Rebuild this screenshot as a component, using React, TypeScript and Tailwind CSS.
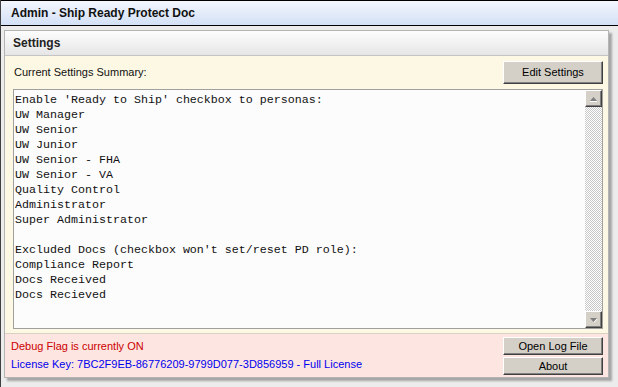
const personas = [
  "Enable 'Ready to Ship' checkbox to personas:",
  "UW Manager",
  "UW Senior",
  "UW Junior",
  "UW Senior - FHA",
  "UW Senior - VA",
  "Quality Control",
  "Administrator",
  "Super Administrator",
  "",
  "Excluded Docs (checkbox won't set/reset PD role):",
  "Compliance Report",
  "Docs Received",
  "Docs Recieved",
];

const btn =
  "bg-[#d4d0c8] border border-t-white border-l-white border-r-[#404040] border-b-[#404040] shadow-[inset_-1px_-1px_0_#808080] text-[11px] text-black flex items-center justify-center";

const ScrollArrow: React.FC<{ up?: boolean }> = ({ up }) => (
  <div className={`w-[17px] h-[17px] ${btn}`}>
    <svg width="9" height="6" viewBox="0 0 9 6">
      {up ? (
        <>
          <path d="M1 5 L4.5 1 L8 5 Z" fill="#808080" />
          <path d="M1 5.5 H8" stroke="#ffffff" strokeWidth="1" />
        </>
      ) : (
        <>
          <path d="M1 1 L4.5 5 L8 1 Z" fill="#808080" />
          <path d="M5 5.5 L8 2" stroke="#ffffff" strokeWidth="1" />
        </>
      )}
    </svg>
  </div>
);

const App: React.FC = () => {
  return (
    <div className="w-[618px] h-[387px] bg-[#ececec] border-l border-[#404040] overflow-hidden font-['Liberation_Sans',Arial,sans-serif]">
      {/* Title bar */}
      <div className="h-[26px] border-t border-b border-black bg-gradient-to-b from-[#f4f7fd] to-[#d3e0f6] flex items-center pl-[10px]">
        <span className="text-[12px] font-bold text-[#111]">Admin - Ship Ready Protect Doc</span>
      </div>

      {/* Settings panel */}
      <div className="pl-[3px] pt-[4px]">
        <div className="w-[605px] border border-[#b4b4b4] shadow-[3px_3px_2px_rgba(0,0,0,0.3)]">
          <div className="h-[25px] bg-gradient-to-b from-[#fdfdfd] to-[#e6e6e6] border-b border-[#c4c4c4] flex items-center pl-[8px]">
            <span className="text-[12px] font-bold text-[#222]">Settings</span>
          </div>

          <div className="bg-[#fdf8e3] pl-[8px] pr-[5px] pt-[5px] pb-[4px] border-b border-[#d8d2c0]">
            <div className="flex justify-between items-center">
              <span className="text-[11px] text-[#111] pl-[1px]">Current Settings Summary:</span>
              <div className={`w-[100px] h-[23px] ${btn}`}>Edit Settings</div>
            </div>
            <div className="mt-[5px] h-[240px] border border-[#a0a0a0] bg-[#fcfcfc] flex">
              <div className="flex-1 pl-[1px] pt-[3px] font-['Liberation_Mono',monospace] text-[11.67px] leading-[15px] text-[#111] whitespace-pre">
                {personas.map((line, i) => (
                  <div key={i} className="h-[15px]">
                    {line}
                  </div>
                ))}
              </div>
              <div className="w-[17px] flex flex-col bg-[repeating-conic-gradient(#c8c8c8_0%_25%,#ffffff_0%_50%)] bg-size-[2px_2px]">
                <ScrollArrow up />
                <div className="flex-1" />
                <ScrollArrow />
              </div>
            </div>
          </div>

          <div className="bg-[#fde5e1] h-[43px] flex justify-between pl-[6px] pr-[5px] pt-[3px]">
            <div className="flex flex-col text-[11px] pt-[3px] gap-[5px]">
              <span className="text-[#cc0000] leading-[13px]">Debug Flag is currently ON</span>
              <span className="text-[#0000ee] leading-[13px]">
                License Key: 7BC2F9EB-86776209-9799D077-3D856959 - Full License
              </span>
            </div>
            <div className="flex flex-col gap-[2px]">
              <div className={`w-[100px] h-[18px] ${btn}`}>Open Log File</div>
              <div className={`w-[100px] h-[18px] ${btn}`}>About</div>
            </div>
          </div>
        </div>
      </div>
    </div>
  );
};

export default App;
